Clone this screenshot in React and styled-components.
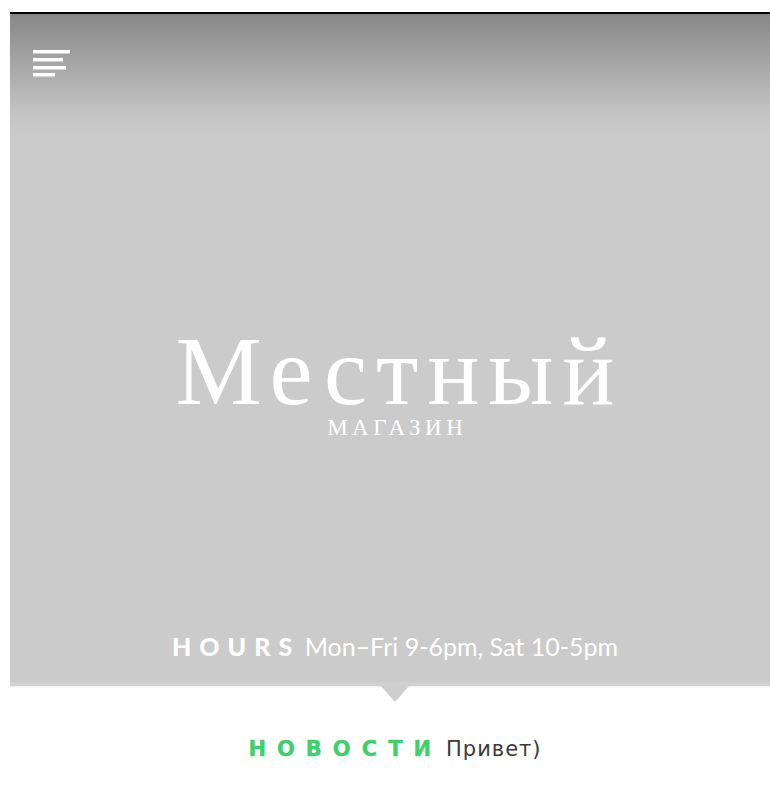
import React from "react";
import styled, { createGlobalStyle } from "styled-components";

const GlobalStyle = createGlobalStyle`
  html, body {
    margin: 0;
    background: #ffffff;
    overflow: hidden;
  }
`;

const MenuIcon = () => (
  <svg width="40" height="28" viewBox="0 0 40 28" fill="#ffffff">
    <rect x="0" y="0" width="37" height="3.5" />
    <rect x="0" y="8" width="30" height="3.5" />
    <rect x="0" y="16" width="33" height="3.5" />
    <rect x="0" y="23" width="22" height="3.5" />
  </svg>
);

const App = () => {
  return (
    <>
      <GlobalStyle />
      <Page>
        <Hero>
          <MenuButton aria-label="menu">
            <MenuIcon />
          </MenuButton>
          <Brand>
            <BrandName>Местный</BrandName>
            <BrandTag>магазин</BrandTag>
          </Brand>
          <Hours>
            <HoursLabel>Hours</HoursLabel> Mon–Fri 9-6pm, Sat 10-5pm
          </Hours>
        </Hero>
        <News>
          <NewsLabel>Новости</NewsLabel>
          <NewsText>Привет)</NewsText>
        </News>
      </Page>
    </>
  );
};

const Page = styled.div`
  padding: 12px 0 0 10px;
  width: 770px;
`;

const Hero = styled.header`
  position: relative;
  display: flex;
  flex-direction: column;
  align-items: center;
  height: 672px;
  border-top: 2px solid #000;
  background: linear-gradient(
    to bottom,
    #878787 0px,
    #a6a6a6 50px,
    #c4c4c4 100px,
    #cbcbcb 125px,
    #cbcbcb 100%
  );
  box-shadow: inset 0 -4px 0 #d0d0d0, 0 1px 1px rgba(0, 0, 0, 0.06);

  &::after {
    content: "";
    position: absolute;
    left: 50%;
    bottom: -16px;
    margin-left: -14px;
    border-left: 14px solid transparent;
    border-right: 14px solid transparent;
    border-top: 16px solid #cecece;
  }
`;

const MenuButton = styled.button`
  align-self: flex-start;
  margin: 36px 0 0 23px;
  padding: 0;
  border: 0;
  background: none;
  line-height: 0;
  cursor: pointer;
  filter: blur(0.4px);
`;

const Brand = styled.div`
  display: flex;
  flex-direction: column;
  align-items: center;
  margin-top: 250px;
  color: #ffffff;
  font-family: "Liberation Serif", "Times New Roman", serif;
`;

const BrandName = styled.h1`
  margin: 0 -9px 0 0;
  font-size: 97px;
  font-weight: 400;
  line-height: 88px;
  letter-spacing: 9px;
`;

const BrandTag = styled.span`
  margin: 0 -4.5px 0 0;
  font-size: 23px;
  line-height: 1;
  letter-spacing: 4.5px;
  text-transform: uppercase;
`;

const Hours = styled.p`
  margin: auto 0 27px;
  color: #ffffff;
  font-family: Lato, "Open Sans", sans-serif;
  font-size: 25px;
  font-weight: 400;
  line-height: 1;
`;

const HoursLabel = styled.strong`
  font-weight: 900;
  text-transform: uppercase;
  letter-spacing: 8px;
  margin-right: -2px;
`;

const News = styled.section`
  display: flex;
  justify-content: center;
  align-items: baseline;
  gap: 15px;
  margin-top: 53px;
  font-family: "DejaVu Sans", Verdana, sans-serif;
  font-size: 21px;
  line-height: 1;
`;

const NewsLabel = styled.span`
  color: #3fcf6c;
  font-weight: 700;
  text-transform: uppercase;
  letter-spacing: 11px;
  margin-right: -11px;
  -webkit-text-stroke: 0.4px #3fcf6c;
`;

const NewsText = styled.span`
  color: #3a3a3a;
  letter-spacing: 1px;
`;

export default App;
